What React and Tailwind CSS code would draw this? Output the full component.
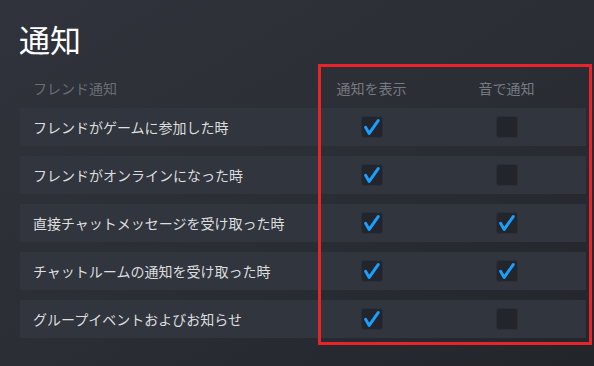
const rows = [
  { label: "フレンドがゲームに参加した時", show: true, sound: false },
  { label: "フレンドがオンラインになった時", show: true, sound: false },
  { label: "直接チャットメッセージを受け取った時", show: true, sound: true },
  { label: "チャットルームの通知を受け取った時", show: true, sound: true },
  { label: "グループイベントおよびお知らせ", show: true, sound: false },
];

const Check = ({ checked }) => (
  <div className="w-[22px] h-[22px] rounded-[3px] bg-[#22252b] border border-[#2c2f36] flex items-center justify-center">
    {checked && (
      <svg width="22" height="22" viewBox="0 0 22 22" className="-m-px">
        <path
          d="M4.6 11.2 L8.2 17.4 L17.2 4.6"
          fill="none"
          stroke="#1a9fff"
          strokeWidth="3"
          strokeLinecap="round"
          strokeLinejoin="round"
        />
      </svg>
    )}
  </div>
);

export default function App() {
  return (
    <div className="relative w-[594px] h-[366px] overflow-hidden bg-gradient-to-br from-[#30333b] via-[#2b2e35] to-[#22252a] font-['Noto_Sans_CJK_JP',sans-serif] pl-5 pr-2">
      <h1 className="pt-[19px] h-[59px] text-[31px] leading-[40px] text-white -ml-px">通知</h1>

      {/* header */}
      <div className="flex items-center h-[30px] mt-[14px] text-[14px]">
        <div className="flex-1 pl-[13px] text-[#6a6e75]">フレンド通知</div>
        <div className="w-[135px] text-center text-[#767a81]">通知を表示</div>
        <div className="w-[135px] text-center text-[#767a81]">音で通知</div>
        <div className="w-[12px]" />
      </div>

      {/* rows */}
      <div className="flex flex-col gap-[10px] mt-[5px]">
        {rows.map((r) => (
          <div key={r.label} className="flex items-center h-[38px] bg-[#31353d] text-[14px] text-[#dcdedf]">
            <div className="flex-1 pl-[13px]">{r.label}</div>
            <div className="w-[135px] flex justify-center">
              <Check checked={r.show} />
            </div>
            <div className="w-[135px] flex justify-center">
              <Check checked={r.sound} />
            </div>
            <div className="w-[12px]" />
          </div>
        ))}
      </div>

      {/* annotation box */}
      <div className="absolute left-[318px] top-[64px] w-[274px] h-[281px] border-[3.5px] border-[#e8232a] pointer-events-none" />
    </div>
  );
}
